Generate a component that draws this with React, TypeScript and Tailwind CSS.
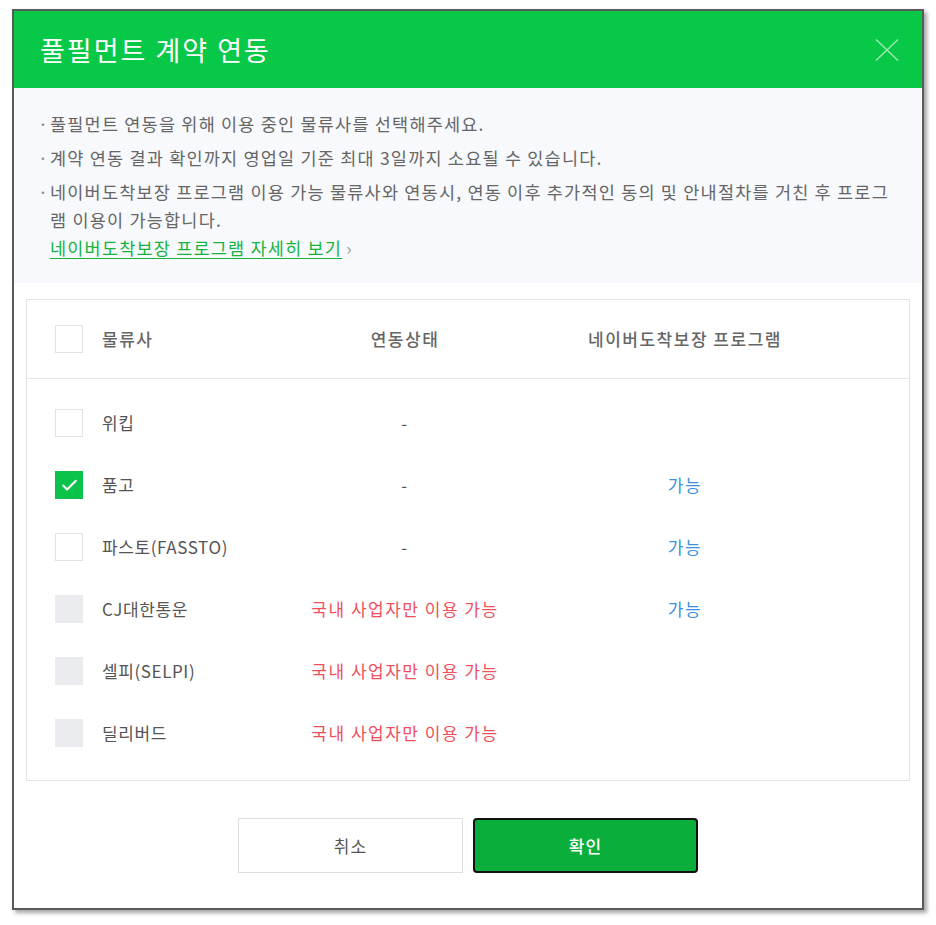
import { Check } from "lucide-react"

type Row = {
    name: string
    status: "none" | "domestic"
    program: boolean
    state: "empty" | "checked" | "disabled"
}

const rows: Row[] = [
    { name: "위킵", status: "none", program: false, state: "empty" },
    { name: "품고", status: "none", program: true, state: "checked" },
    { name: "파스토(FASSTO)", status: "none", program: true, state: "empty" },
    { name: "CJ대한통운", status: "domestic", program: true, state: "disabled" },
    { name: "셀피(SELPI)", status: "domestic", program: false, state: "disabled" },
    { name: "딜리버드", status: "domestic", program: false, state: "disabled" },
]

const notices = [
    "풀필먼트 연동을 위해 이용 중인 물류사를 선택해주세요.",
    "계약 연동 결과 확인까지 영업일 기준 최대 3일까지 소요될 수 있습니다.",
    "네이버도착보장 프로그램 이용 가능 물류사와 연동시, 연동 이후 추가적인 동의 및 안내절차를 거친 후 프로그램 이용이 가능합니다.",
]

function Box({ state }: { state: Row["state"] }) {
    if (state === "checked") {
        return (
            <span className="flex h-7 w-7 items-center justify-center bg-[#0bc24a]">
                <Check size={19} strokeWidth={2.6} className="text-white" />
            </span>
        )
    }
    if (state === "disabled") {
        return <span className="block h-7 w-7 bg-[#e9ebee]" />
    }
    return <span className="block h-7 w-7 border border-[#e2e2e2] bg-white" />
}

export default function App() {
    return (
        <div className="min-h-[925px] bg-white pl-3 pt-[9px] font-['Noto_Sans_CJK_KR','Noto_Sans',sans-serif]">
            <div className="w-[912px] border-2 border-[#5a5a5a] bg-white shadow-[3px_3px_4px_rgba(0,0,0,0.35)]">
                {/* header */}
                <div className="flex h-[77px] items-center justify-between bg-[#08c847] pl-[26px] pr-[23px]">
                    <h1 className="text-[27px] leading-none tracking-[2px] text-white">풀필먼트 계약 연동</h1>
                    <svg width="24" height="24" viewBox="0 0 24 24" className="text-white/60" aria-hidden="true">
                        <path d="M1 1.5 L23 22.5 M23 1.5 L1 22.5" stroke="currentColor" strokeWidth="1.5" fill="none" />
                    </svg>
                </div>

                {/* notices */}
                <div className="bg-[#f7f9fc] pb-[21px] pl-6 pr-8 pt-[22px] text-[17.5px] leading-[28px] tracking-[1.2px] text-[#666]">
                    <ul className="flex flex-col gap-[6px]">
                        {notices.map((n, i) => (
                            <li key={i} className="flex">
                                <span className="w-3 shrink-0 tracking-normal text-[#888]">·</span>
                                <span>{n}</span>
                            </li>
                        ))}
                    </ul>
                    <div className="pl-3">
                        <a href="#" className="text-[#16b43f] underline underline-offset-[3px]">
                            네이버도착보장 프로그램 자세히 보기
                        </a>
                        <span className="ml-1 text-[#999]">›</span>
                    </div>
                </div>

                {/* carriers table */}
                <div className="mx-3 mt-4 border border-[#e3e3e3] text-[17px] tracking-[1.5px]">
                    <div className="grid h-[79px] grid-cols-[278px_200px_360px_1fr] items-center border-b border-[#e6e6e6] font-medium text-[#666]">
                        <div className="flex items-center gap-[19px] pl-7">
                            <Box state="empty" />
                            <span>물류사</span>
                        </div>
                        <div className="text-center">연동상태</div>
                        <div className="text-center">네이버도착보장 프로그램</div>
                        <div />
                    </div>
                    <div className="pb-4 pt-[13px]">
                        {rows.map((r) => (
                            <div key={r.name} className="grid h-[62px] grid-cols-[278px_200px_360px_1fr] items-center text-[#555]">
                                <div className="flex items-center gap-[19px] pl-7">
                                    <Box state={r.state} />
                                    <span className="tracking-[0.6px]">{r.name}</span>
                                </div>
                                <div className="text-center">
                                    {r.status === "none" ? (
                                        <span className="text-[#555]">-</span>
                                    ) : (
                                        <span className="text-[#f0505c]">국내 사업자만 이용 가능</span>
                                    )}
                                </div>
                                <div className="text-center text-[#3b8fe0]">{r.program ? "가능" : ""}</div>
                                <div />
                            </div>
                        ))}
                    </div>
                </div>

                {/* actions */}
                <div className="flex justify-center gap-[10px] pb-[35px] pt-[37px] text-[17px] tracking-[1px]">
                    <button className="h-[55px] w-[225px] border border-[#dedede] bg-white text-[#555]">취소</button>
                    <button className="h-[55px] w-[225px] rounded-[4px] border-2 border-[#111] bg-[#0aae3b] font-medium text-white">
                        확인
                    </button>
                </div>
            </div>
        </div>
    )
}
